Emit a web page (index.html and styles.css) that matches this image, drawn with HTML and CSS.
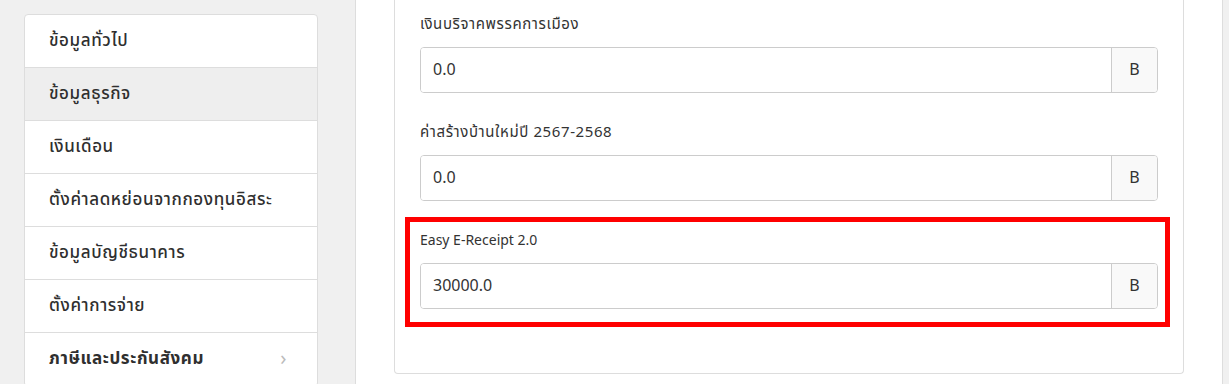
FILE: index.html
```html
<!DOCTYPE html>
<html lang="th">
  <head>
    <meta charset="UTF-8" />
    <meta name="viewport" content="width=device-width, initial-scale=1.0" />
    <title>ตั้งค่าลดหย่อน</title>
    <link rel="stylesheet" href="styles.css">
  </head>
  <body>
    <div class="layout">
      <ul class="side-menu">
        <li class="menu-item">ข้อมูลทั่วไป</li>
        <li class="menu-item active">ข้อมูลธุรกิจ</li>
        <li class="menu-item">เงินเดือน</li>
        <li class="menu-item">ตั้งค่าลดหย่อนจากกองทุนอิสระ</li>
        <li class="menu-item">ข้อมูลบัญชีธนาคาร</li>
        <li class="menu-item">ตั้งค่าการจ่าย</li>
        <li class="menu-item group">
          ภาษีและประกันสังคม
          <span class="chevron">&#8250;</span>
        </li>
      </ul>

      <div class="main-panel">
        <div class="card">
          <div class="form-group">
            <label for="donation" class="th">เงินบริจาคพรรคการเมือง</label>
            <div class="input-wrap">
              <input type="text" id="donation" value="0.0" />
              <span class="addon">B</span>
            </div>
          </div>
          <div class="form-group">
            <label for="newHouse" class="th">ค่าสร้างบ้านใหม่ปี 2567-2568</label>
            <div class="input-wrap">
              <input type="text" id="newHouse" value="0.0" />
              <span class="addon">B</span>
            </div>
          </div>
          <div class="form-group highlighted">
            <!-- red annotation box drawn over the field -->
            <span class="mark"></span>
            <label for="eReceipt">Easy E-Receipt 2.0</label>
            <div class="input-wrap">
              <input type="text" id="eReceipt" value="30000.0" />
              <span class="addon">B</span>
            </div>
          </div>
        </div>
      </div>
    </div>
  </body>
</html>
```

FILE: styles.css
```css
body {
  font-family: "Segoe UI", Tahoma, "Noto Sans Thai", "Open Sans", sans-serif;
  margin: 0;
  padding: 0;
  background-color: #f0f0f0;
  color: #333;
  height: 384px;
  overflow: hidden;
}

.layout {
  display: flex;
  align-items: flex-start;
  padding-left: 24px;
}

.side-menu {
  list-style: none;
  margin: 14px 37px 0 0;
  padding: 0;
  width: 292px;
  background-color: #fff;
  border: 1px solid #ddd;
  border-radius: 4px;
  overflow: hidden;
}

.menu-item {
  display: flex;
  align-items: center;
  justify-content: space-between;
  padding: 15px 24px;
  line-height: 22px;
  font-size: 17px;
  letter-spacing: 0.6px;
  font-weight: 500;
  color: #2f2f2f;
  border-bottom: 1px solid #ddd;
}

.menu-item.active {
  background-color: #eee;
}

.menu-item.group {
  font-weight: bold;
}

.chevron {
  color: #bbb;
  font-weight: normal;
  font-size: 20px;
  margin-right: 6px;
}

.main-panel {
  width: 790px;
  height: 384px;
  background-color: #fff;
  border-left: 1px solid #ddd;
  border-right: 1px solid #ddd;
  padding: 0 38px;
}

.card {
  border: 1px solid #ddd;
  border-top: none;
  border-radius: 0 0 4px 4px;
  padding: 15px 25px 34px;
}

.form-group {
  position: relative;
  margin-bottom: 30px;
}

.form-group label {
  display: block;
  font-size: 14px;
  line-height: 20px;
  margin-bottom: 12px;
}

.form-group label.th {
  font-size: 15px;
  letter-spacing: 0.6px;
}

.input-wrap {
  display: flex;
  height: 46px;
  box-sizing: border-box;
  border: 1px solid #ccc;
  border-radius: 4px;
  overflow: hidden;
}

.input-wrap input {
  flex: 1;
  border: none;
  padding: 0 12px;
  font-family: inherit;
  font-size: 16px;
  color: #333;
  outline: none;
}

.addon {
  width: 45px;
  display: flex;
  align-items: center;
  justify-content: center;
  background-color: #f9f9f9;
  border-left: 1px solid #ccc;
  font-size: 16px;
}

.mark {
  position: absolute;
  left: -15px;
  top: -14px;
  width: 755px;
  height: 100px;
  border: 5px solid #f00;
}
```
